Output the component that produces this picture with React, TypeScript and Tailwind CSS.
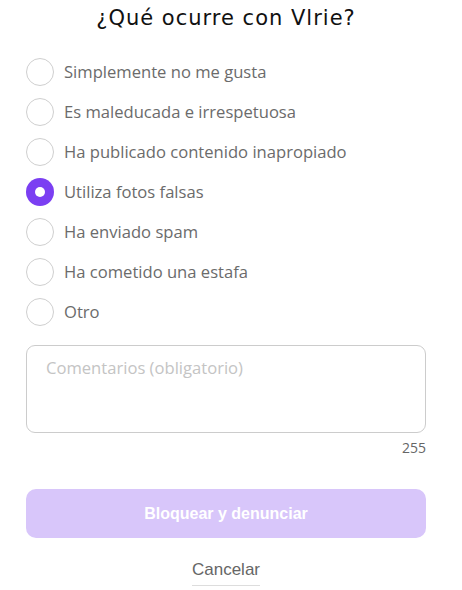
import React from "react";

const options = [
  "Simplemente no me gusta",
  "Es maleducada e irrespetuosa",
  "Ha publicado contenido inapropiado",
  "Utiliza fotos falsas",
  "Ha enviado spam",
  "Ha cometido una estafa",
  "Otro",
];

export default function App() {
  const selected = 3;
  return (
    <div className="w-[462px] h-[590px] bg-white flex flex-col px-[26px] pr-[36px]">
      <h1
        className="h-[52px] pt-[4px] text-center text-[21px] tracking-[1px] leading-[28px] text-[#111]"
        style={{ fontFamily: "'DejaVu Sans', sans-serif" }}
      >
        ¿Qué ocurre con Vlrie?
      </h1>
      <div className="flex flex-col" style={{ fontFamily: "'Open Sans', sans-serif" }}>
        {options.map((o, i) => (
          <div key={o} className="h-[40px] flex items-center gap-[10px]">
            {i === selected ? (
              <span className="w-[28px] h-[28px] rounded-full bg-[#7b3ff2] flex items-center justify-center shrink-0">
                <span className="w-[10px] h-[10px] rounded-full bg-white" />
              </span>
            ) : (
              <span className="w-[28px] h-[28px] rounded-full border border-[#cfcfcf] bg-white shrink-0" />
            )}
            <span className="text-[16.6px] text-[#6b6b6b] leading-none">{o}</span>
          </div>
        ))}
      </div>
      <div
        className="mt-[13px] h-[88px] rounded-[9px] border border-[#cccccc] px-[19px] pt-[10px] text-[16.6px] text-[#c4c4c4]"
        style={{ fontFamily: "'Open Sans', sans-serif" }}
      >
        Comentarios (obligatorio)
      </div>
      <div
        className="text-right text-[14px] text-[#666] mt-[5px] leading-[20px]"
        style={{ fontFamily: "'Open Sans', sans-serif" }}
      >
        255
      </div>
      <div
        className="mt-[31px] h-[49px] rounded-[10px] bg-[#d8c6fa] flex items-center justify-center text-white text-[16px] font-bold"
        style={{ fontFamily: "'Liberation Sans', Arial, sans-serif" }}
      >
        Bloquear y denunciar
      </div>
      <div className="flex justify-center mt-[22px]">
        <span
          className="text-[17px] text-[#666] border-b border-[#dddddd] pb-[5px] leading-[20px]"
          style={{ fontFamily: "'Liberation Sans', Arial, sans-serif" }}
        >
          Cancelar
        </span>
      </div>
    </div>
  );
}
